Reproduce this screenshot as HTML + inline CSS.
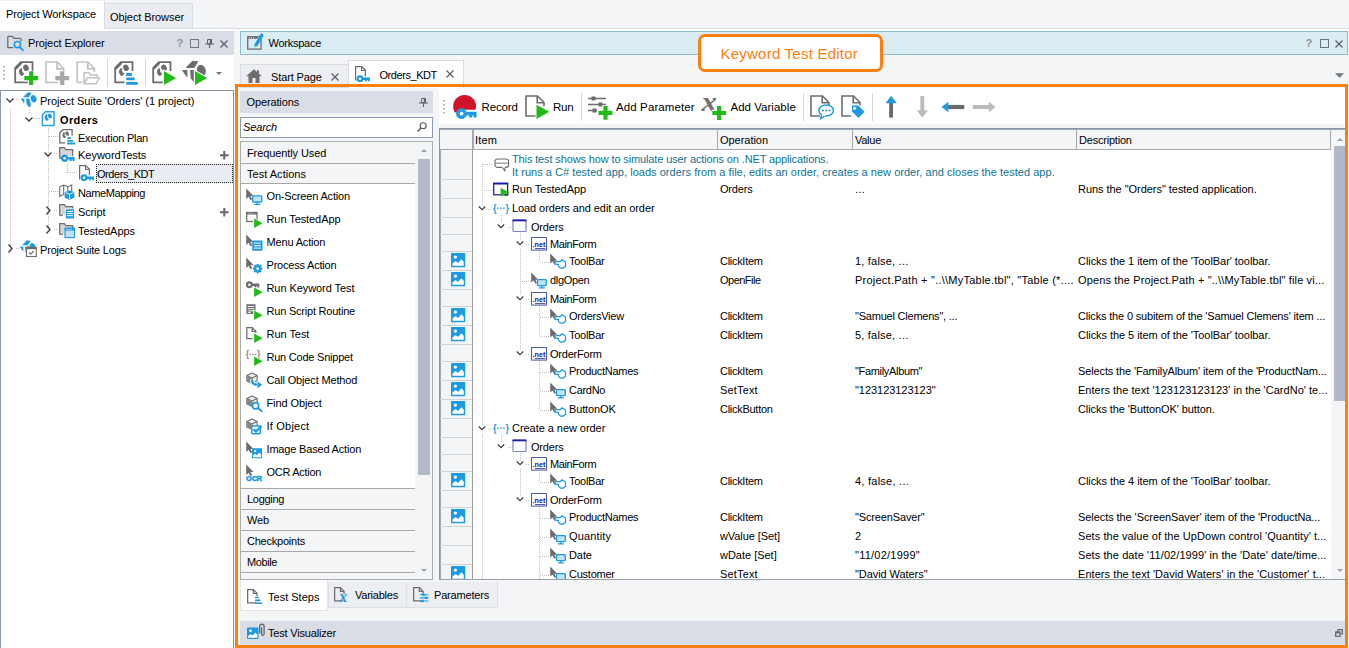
<!DOCTYPE html><html><head><meta charset="utf-8"><title>Keyword Test Editor</title><style>
html,body{margin:0;padding:0}
body{width:1349px;height:648px;position:relative;overflow:hidden;background:#f4f5f7;font-family:"Liberation Sans",sans-serif;font-size:11px;color:#000}
.a{position:absolute;box-sizing:border-box}
.t{position:absolute;white-space:pre;line-height:14px;height:14px}
svg{overflow:visible}
</style></head><body>
<div class="a" style="left:0px;top:28px;width:1349px;height:1px;background:#dadde5"></div>
<div class="a" style="left:0px;top:29px;width:1349px;height:2px;background:#fff"></div>
<div class="a" style="left:0px;top:0px;width:105px;height:29px;background:#fff;border-right:1px solid #dfe2e8;border-top:1px solid #eceef2"></div>
<div class="a" style="left:104px;top:3px;width:89px;height:25px;background:#eaecf1;border:1px solid #d9dce3;border-bottom:none"></div>
<div class="t" style="left:6px;top:6.99px;font-size:11px;color:#000;letter-spacing:-0.124px">Project Workspace</div>
<div class="t" style="left:110px;top:9.99px;font-size:11px;color:#000;letter-spacing:-0.086px">Object Browser</div>
<div class="a" style="left:0px;top:31px;width:234px;height:24px;background:#d9dde6"></div>
<svg class="a" style="left:7px;top:35px;" width="16" height="16" viewBox="0 0 16 16"><path d="M6.300 12.700H1.600a.8.8 0 0 1-.8-.8V2.200a.8.8 0 0 1 .8-.8h3.600l1.600 2h6.400a.8.8 0 0 1 .8.8v2.300" fill="none" stroke="#6d6d6d" stroke-width="1.300"/><circle cx="10.400" cy="9.600" r="3.100" fill="none" stroke="#1e9be0" stroke-width="1.600"/><path d="M12.700 12l3.100 3.200" stroke="#1e9be0" stroke-width="1.900" stroke-linecap="round"/></svg>
<div class="t" style="left:28px;top:35.99px;font-size:11px;color:#000;letter-spacing:-0.110px">Project Explorer</div>
<div class="t" style="left:176.5px;top:36.09px;font-size:11px;color:#8e929b;font-weight:bold">?</div>
<div class="a" style="left:190px;top:39px;width:9px;height:9px;border:1px solid #747881"></div>
<svg class="a" style="left:205px;top:39.2px;" width="9" height="9" viewBox="0 0 9 9"><path d="M2.500 .5h4v4.300h-4z" fill="none" stroke="#5f646e" stroke-width="1"/><path d="M5.600 .5v4.300" stroke="#5f646e" stroke-width="1.600"/><path d="M0 5h9M4.500 5v4" fill="none" stroke="#5f646e" stroke-width="1.100"/></svg>
<svg class="a" style="left:220px;top:39.5px;" width="8" height="8" viewBox="0 0 8 8"><path d="M.5 .5l7 7M7.5 .5l-7 7" stroke="#5b5f68" stroke-width="1.25" fill="none"/></svg>
<div class="a" style="left:0px;top:55px;width:234px;height:35px;background:#fff"></div>
<svg class="a" style="left:3px;top:66px;" width="3" height="14" viewBox="0 0 3 14"><path d="M1 0v14" stroke="#a2a2a2" stroke-width="1.600" stroke-dasharray="1.600 2.400"/></svg>
<svg class="a" style="left:14px;top:61px;" width="24" height="24" viewBox="0 0 24 24"><path d="M14 21.400H1.200V7L7 1.200h11.500V10" fill="#fff" stroke="#6d6d6d" stroke-width="1.800"/><path d="M1.600 7.400L7.400 1.600" stroke="#6d6d6d" stroke-width="2.800"/><path d="M6.500 7.200C4.200 9.500 4.600 13.500 8 15.200l2.600-2.800C8.200 12 7.400 9.500 8.400 7.600z" fill="#6d6d6d"/><ellipse cx="12" cy="6.800" rx="2.700" ry="3.300" transform="rotate(-25 12 6.800)" fill="#6d6d6d"/><path d="M17.2 9.799999999999999v14.800M9.799999999999999 17.2h14.800" stroke="#fff" stroke-width="6.400"/><path d="M17.2 10.299999999999999v13.800M10.299999999999999 17.2h13.800" stroke="#20bb15" stroke-width="4.200"/></svg>
<svg class="a" style="left:45px;top:61px;" width="24" height="24" viewBox="0 0 24 24"><path d="M13 21.400H1V1h11.200l6.500 6.500V10" fill="#fff" stroke="#c3c3c3" stroke-width="1.700"/><path d="M12 1.300v6.500h6.500" fill="none" stroke="#c3c3c3" stroke-width="1.700"/><path d="M17.2 9.799999999999999v14.800M9.799999999999999 17.2h14.800" stroke="#fff" stroke-width="6.400"/><path d="M17.2 10.299999999999999v13.800M10.299999999999999 17.2h13.800" stroke="#a8a8a8" stroke-width="4.200"/></svg>
<svg class="a" style="left:76px;top:61px;" width="24" height="24" viewBox="0 0 24 24"><path d="M6 21.400H1.200V1h10.800l6.400 6.500V11" fill="#fff" stroke="#c3c3c3" stroke-width="1.700"/><path d="M11.800 1.300v6.500h6.500" fill="none" stroke="#c3c3c3" stroke-width="1.700"/><path d="M8 22.600v-10.800h5l1.600 2.200h6.600v3" fill="#fff" stroke="#c3c3c3" stroke-width="1.600"/><path d="M8 22.800l3.400-6h12l-3.400 6z" fill="#fff" stroke="#c3c3c3" stroke-width="1.600"/></svg>
<div class="a" style="left:107px;top:59px;width:1px;height:28px;background:#d3d6dc"></div>
<svg class="a" style="left:114px;top:61px;" width="24" height="24" viewBox="0 0 24 24"><path d="M14 21.400H1.200V7L7 1.200h11.500V10" fill="#fff" stroke="#6d6d6d" stroke-width="1.800"/><path d="M1.600 7.400L7.400 1.600" stroke="#6d6d6d" stroke-width="2.800"/><path d="M6.500 7.200C4.200 9.500 4.600 13.500 8 15.200l2.600-2.800C8.200 12 7.400 9.500 8.400 7.600z" fill="#6d6d6d"/><ellipse cx="12" cy="6.800" rx="2.700" ry="3.300" transform="rotate(-25 12 6.800)" fill="#6d6d6d"/><path d="M10.500 10.500h10v14h-10z" fill="#fff"/><path d="M12.200 13.500h5.800M12.200 17.900h8.500M12.200 22.400h11.600" stroke="#1e9be0" stroke-width="2.800"/></svg>
<div class="a" style="left:145px;top:59px;width:1px;height:28px;background:#d3d6dc"></div>
<svg class="a" style="left:152px;top:61px;" width="24" height="24" viewBox="0 0 24 24"><path d="M14 21.400H1.200V7L7 1.200h11.500V10" fill="#fff" stroke="#6d6d6d" stroke-width="1.800"/><path d="M1.600 7.400L7.400 1.600" stroke="#6d6d6d" stroke-width="2.800"/><path d="M6.500 7.200C4.200 9.500 4.600 13.500 8 15.200l2.600-2.800C8.200 12 7.400 9.500 8.400 7.600z" fill="#6d6d6d"/><ellipse cx="12" cy="6.800" rx="2.700" ry="3.300" transform="rotate(-25 12 6.800)" fill="#6d6d6d"/><path d="M10.800 8L26 17 10.800 26z" fill="#fff"/><path d="M12 10.100v13.800L24 17z" fill="#20bb15"/></svg>
<svg class="a" style="left:183px;top:61px;" width="24" height="24" viewBox="0 0 24 24"><g transform="translate(-.600 -.800) scale(1.500)"><g fill="#6d6d6d" stroke="#6d6d6d" stroke-width=".7" stroke-linejoin="round"><path d="M2.700 4.900L6.800 .7l3.300 .4L7.700 4.900z"/><ellipse cx="12.600" cy="6.800" rx="2.600" ry="3.400" transform="rotate(-18 12.600 6.800)"/><path d="M.3 6.900H3v3.900z"/><path d="M5.500 6.900h2.600l1.500 6-1.100 2.300L5.900 12z"/></g></g><path d="M10.800 8L26 17 10.800 26z" fill="#fff"/><path d="M12 10.100v13.800L24 17z" fill="#20bb15"/></svg>
<svg class="a" style="left:216px;top:72px;" width="6" height="3" viewBox="0 0 6 3"><path d="M0 0h6L3 3z" fill="#70747c"/></svg>
<div class="a" style="left:0px;top:90px;width:234px;height:560px;background:#fff;border:1px solid #8a96ae"></div>
<div class="a" style="left:96px;top:164px;width:137px;height:19px;background:#e9ecf2;border:1px dotted #222"></div>
<div class="a" style="left:10px;top:108px;width:1px;height:138px;background-image:linear-gradient(#bdbdbd 1px,transparent 1px);background-size:1px 2px"></div>
<div class="a" style="left:16px;top:99px;width:4px;height:1px;background-image:linear-gradient(90deg,#bdbdbd 1px,transparent 1px);background-size:2px 1px"></div>
<div class="a" style="left:16px;top:248px;width:4px;height:1px;background-image:linear-gradient(90deg,#bdbdbd 1px,transparent 1px);background-size:2px 1px"></div>
<div class="a" style="left:29px;top:110px;width:1px;height:4px;background-image:linear-gradient(#bdbdbd 1px,transparent 1px);background-size:1px 2px"></div>
<div class="a" style="left:35px;top:118px;width:5px;height:1px;background-image:linear-gradient(90deg,#bdbdbd 1px,transparent 1px);background-size:2px 1px"></div>
<div class="a" style="left:48px;top:128px;width:1px;height:102px;background-image:linear-gradient(#bdbdbd 1px,transparent 1px);background-size:1px 2px"></div>
<div class="a" style="left:49px;top:136px;width:9px;height:1px;background-image:linear-gradient(90deg,#bdbdbd 1px,transparent 1px);background-size:2px 1px"></div>
<div class="a" style="left:54px;top:153px;width:4px;height:1px;background-image:linear-gradient(90deg,#bdbdbd 1px,transparent 1px);background-size:2px 1px"></div>
<div class="a" style="left:49px;top:191px;width:9px;height:1px;background-image:linear-gradient(90deg,#bdbdbd 1px,transparent 1px);background-size:2px 1px"></div>
<div class="a" style="left:54px;top:210px;width:4px;height:1px;background-image:linear-gradient(90deg,#bdbdbd 1px,transparent 1px);background-size:2px 1px"></div>
<div class="a" style="left:54px;top:229px;width:4px;height:1px;background-image:linear-gradient(90deg,#bdbdbd 1px,transparent 1px);background-size:2px 1px"></div>
<div class="a" style="left:67px;top:164px;width:1px;height:9px;background-image:linear-gradient(#bdbdbd 1px,transparent 1px);background-size:1px 2px"></div>
<div class="a" style="left:68px;top:172px;width:9px;height:1px;background-image:linear-gradient(90deg,#bdbdbd 1px,transparent 1px);background-size:2px 1px"></div>
<svg class="a" style="left:6px;top:97.8px;" width="8" height="5" viewBox="0 0 8 5"><path d="M.5 .5L4 4 7.5 .5" fill="none" stroke="#404040" stroke-width="1.350"/></svg>
<svg class="a" style="left:21px;top:92.2px;" width="16" height="16" viewBox="0 0 16 16"><g fill="#1e9be0" stroke="#1e9be0" stroke-width=".7" stroke-linejoin="round"><path d="M2.700 4.900L6.800 .7l3.300 .4L7.700 4.900z"/><ellipse cx="12.600" cy="6.800" rx="2.600" ry="3.400" transform="rotate(-18 12.600 6.800)"/><path d="M.3 6.900H3v3.900z"/><path d="M5.500 6.900h2.600l1.500 6-1.100 2.300L5.900 12z"/></g></svg>
<div class="t" style="left:40px;top:94.19px;font-size:11px;color:#000;letter-spacing:-0.042px">Project Suite 'Orders' (1 project)</div>
<svg class="a" style="left:25px;top:116.8px;" width="8" height="5" viewBox="0 0 8 5"><path d="M.5 .5L4 4 7.5 .5" fill="none" stroke="#404040" stroke-width="1.350"/></svg>
<svg class="a" style="left:41px;top:111.2px;" width="16" height="16" viewBox="0 0 16 16"><path d="M4.500 .8H13v13.600H1.400V3.900z" fill="#fff" stroke="#2ba4e6" stroke-width="1.500"/><path d="M5.400 3C3 5 3.200 8.600 6.200 10l1.700-2C6.100 7.600 5.700 5.600 6.700 4z" fill="#1e9be0"/><ellipse cx="8.900" cy="5" rx="1.900" ry="2.600" transform="rotate(-25 8.900 5)" fill="#1e9be0"/></svg>
<div class="t" style="left:60px;top:113.19px;font-size:11px;color:#000;font-weight:bold;letter-spacing:0.370px">Orders</div>
<svg class="a" style="left:59px;top:129.2px;" width="16" height="16" viewBox="0 0 16 16"><path d="M6 13.900H.8V3.700L3.800 .7h9.300v6" fill="#fff" stroke="#6d6d6d" stroke-width="1.300"/><path d="M5 3C2.800 4.800 3 8 5.600 9.300l1.500-1.800C5.500 7.100 5.200 5.300 6.100 3.900z" fill="#6d6d6d"/><ellipse cx="8.200" cy="4.600" rx="1.700" ry="2.300" transform="rotate(-25 8.200 4.600)" fill="#6d6d6d"/><path d="M8.200 9.200h3.600M8.200 11.900h6M8.200 14.500h7.800" stroke="#1e9be0" stroke-width="1.800"/></svg>
<div class="t" style="left:78px;top:131.19px;font-size:11px;color:#000;letter-spacing:-0.242px">Execution Plan</div>
<svg class="a" style="left:44px;top:151.8px;" width="8" height="5" viewBox="0 0 8 5"><path d="M.5 .5L4 4 7.5 .5" fill="none" stroke="#404040" stroke-width="1.350"/></svg>
<svg class="a" style="left:59px;top:146.2px;" width="16" height="16" viewBox="0 0 16 16"><path d="M.7 12.3V1.7h4.6l1.4 1.9h7v8.7" fill="#d6d6d6" stroke="#6d6d6d" stroke-width="1.2"/><path d="M.7 12.3h3" stroke="#6d6d6d" stroke-width="1.2"/><path d="M2 8.500h13.500v7.500H2z" fill="#fff" opacity=".0"/><g stroke="#fff" stroke-width="1.200"><g transform="translate(2.2 8.8) scale(1.15)"><circle cx="3" cy="3" r="2.050" fill="#fff" stroke="#1e9be0" stroke-width="1.900"/><path d="M5 1.900h6.600v2.200H5zM7.400 3.500h1.700v1.800H7.400zM9.900 3.500h1.700v1.800H9.900z" fill="#1e9be0"/></g></g><g transform="translate(2.2 8.8) scale(1.15)"><circle cx="3" cy="3" r="2.050" fill="#fff" stroke="#1e9be0" stroke-width="1.900"/><path d="M5 1.900h6.600v2.200H5zM7.400 3.500h1.700v1.800H7.400zM9.900 3.500h1.700v1.800H9.900z" fill="#1e9be0"/></g></svg>
<div class="t" style="left:78px;top:148.19px;font-size:11px;color:#000;letter-spacing:-0.015px">KeywordTests</div>
<svg class="a" style="left:78px;top:165.2px;" width="16" height="16" viewBox="0 0 16 16"><path d="M1.600 14.400V.7h6.200l3.600 3.600v6" fill="#fff" stroke="#6d6d6d" stroke-width="1.200"/><path d="M7.600 .9v3.600h3.600" fill="none" stroke="#6d6d6d" stroke-width="1.200"/><g transform="translate(2.6 9.2) scale(1.15)"><circle cx="3" cy="3" r="2.050" fill="#fff" stroke="#1e9be0" stroke-width="1.900"/><path d="M5 1.900h6.600v2.200H5zM7.400 3.500h1.700v1.800H7.400zM9.900 3.500h1.700v1.800H9.900z" fill="#1e9be0"/></g></svg>
<div class="t" style="left:97px;top:167.19px;font-size:11px;color:#000;letter-spacing:-0.435px">Orders_KDT</div>
<svg class="a" style="left:59px;top:184.2px;" width="16" height="16" viewBox="0 0 16 16"><path d="M.7 2.700L4.700 1l4 1.700 4-1.700v6M.7 2.700v9.600l4-1.700" fill="#fff" stroke="#6d6d6d" stroke-width="1.100"/><path d="M4.700 1v9.600M8.700 2.700v4" stroke="#6d6d6d" stroke-width="1.100" fill="none"/><path d="M10.500 6.200l4.800 2v5.600l-4.800 2-4.800-2V8.200z" fill="#1e9be0"/><path d="M6.500 8.600l4 1.700 4-1.700M10.500 10.300v4.700" stroke="#fff" stroke-width=".9" fill="none"/></svg>
<div class="t" style="left:78px;top:186.19px;font-size:11px;color:#000;letter-spacing:-0.413px">NameMapping</div>
<svg class="a" style="left:46px;top:206px;" width="5" height="9" viewBox="0 0 5 9"><path d="M.5 .5L4 4.5 .5 8.500" fill="none" stroke="#404040" stroke-width="1.350"/></svg>
<svg class="a" style="left:59px;top:203.2px;" width="16" height="16" viewBox="0 0 16 16"><path d="M.7 12.3V1.7h4.6l1.4 1.9h7v8.7" fill="#d6d6d6" stroke="#6d6d6d" stroke-width="1.2"/><path d="M.7 12.3h3" stroke="#6d6d6d" stroke-width="1.2"/><rect x="6.400" y="5.900" width="9" height="10" fill="#1e9be0" stroke="#fff" stroke-width=".8"/><path d="M8 8.500h6M8 10.600h6M8 12.700h6" stroke="#fff" stroke-width="1"/></svg>
<div class="t" style="left:78px;top:205.19px;font-size:11px;color:#000;letter-spacing:-0.137px">Script</div>
<svg class="a" style="left:46px;top:225px;" width="5" height="9" viewBox="0 0 5 9"><path d="M.5 .5L4 4.5 .5 8.500" fill="none" stroke="#404040" stroke-width="1.350"/></svg>
<svg class="a" style="left:59px;top:222.2px;" width="16" height="16" viewBox="0 0 16 16"><path d="M.7 12.3V1.7h4.6l1.4 1.9h7v8.7" fill="#d6d6d6" stroke="#6d6d6d" stroke-width="1.2"/><path d="M.7 12.3h3" stroke="#6d6d6d" stroke-width="1.2"/><rect x="6" y="6" width="9.500" height="9.600" fill="#bfe2f7" stroke="#1e9be0" stroke-width="1.100"/><path d="M6 7.300h9.500" stroke="#1e9be0" stroke-width="2.600"/><path d="M7.500 7.400h5" stroke="#fff" stroke-width=".9" stroke-dasharray="1 1"/></svg>
<div class="t" style="left:78px;top:224.19px;font-size:11px;color:#000;letter-spacing:-0.048px">TestedApps</div>
<svg class="a" style="left:8px;top:244px;" width="5" height="9" viewBox="0 0 5 9"><path d="M.5 .5L4 4.5 .5 8.500" fill="none" stroke="#404040" stroke-width="1.350"/></svg>
<svg class="a" style="left:21px;top:241.2px;" width="16" height="16" viewBox="0 0 16 16"><g transform="translate(-1 -1)"><g fill="#1e9be0" stroke="#1e9be0" stroke-width=".7" stroke-linejoin="round"><path d="M2.700 4.900L6.800 .7l3.300 .4L7.700 4.900z"/><ellipse cx="12.600" cy="6.800" rx="2.600" ry="3.400" transform="rotate(-18 12.600 6.800)"/><path d="M.3 6.900H3v3.900z"/><path d="M5.500 6.900h2.600l1.500 6-1.100 2.300L5.900 12z"/></g></g><rect x="5.500" y="6.500" width="9.800" height="9" fill="#fff" stroke="#6d6d6d" stroke-width="1.100"/><path d="M5.500 7.200h9.800" stroke="#6d6d6d" stroke-width="2"/><path d="M8 11.500l1.700 1.700 3-3.200" fill="none" stroke="#6d6d6d" stroke-width="1.100"/><path d="M7.500 5v2M13.300 5v2" stroke="#6d6d6d" stroke-width="1.200"/></svg>
<div class="t" style="left:40px;top:243.19px;font-size:11px;color:#000;letter-spacing:-0.182px">Project Suite Logs</div>
<svg class="a" style="left:219.5px;top:150.5px;" width="8.5" height="8.5" viewBox="0 0 9 9"><path d="M4.5 0v9M0 4.5h9" stroke="#666" stroke-width="2.100"/></svg>
<svg class="a" style="left:219.5px;top:207.5px;" width="8.5" height="8.5" viewBox="0 0 9 9"><path d="M4.5 0v9M0 4.5h9" stroke="#666" stroke-width="2.100"/></svg>
<div class="a" style="left:240px;top:31px;width:1108px;height:24px;background:#d9edf2;border:1px solid #8fbcd3"></div>
<svg class="a" style="left:247px;top:34px;" width="16" height="16" viewBox="0 0 16 16"><rect x=".7" y="2.700" width="13.400" height="12.400" fill="none" stroke="#6d6d6d" stroke-width="1.300"/><path d="M.7 3.800h10" stroke="#6d6d6d" stroke-width="2"/><path d="M2 3.800h6" stroke="#e4e4e4" stroke-width=".9" stroke-dasharray="1 1"/><path d="M14.700 1.300L9.300 10.600" stroke="#1e9be0" stroke-width="3.300" stroke-linecap="round"/><path d="M7.900 10.300l-.6 3 2.600-1.600z" fill="#1e9be0"/></svg>
<div class="t" style="left:268.5px;top:35.99px;font-size:11px;color:#000;letter-spacing:-0.259px">Workspace</div>
<div class="t" style="left:1305.5px;top:36.09px;font-size:11px;color:#8e929b;font-weight:bold">?</div>
<div class="a" style="left:1320px;top:39px;width:9px;height:9px;border:1px solid #6c7078"></div>
<svg class="a" style="left:1335px;top:39.5px;" width="8" height="8" viewBox="0 0 8 8"><path d="M.5 .5l7 7M7.5 .5l-7 7" stroke="#5b5f68" stroke-width="1.25" fill="none"/></svg>
<svg class="a" style="left:1335px;top:73px;" width="9" height="5" viewBox="0 0 6 3"><path d="M0 0h6L3 3z" fill="#70747c"/></svg>
<div class="a" style="left:240px;top:64px;width:109px;height:24px;background:#eceef3;border:1px solid #d9dce3"></div>
<svg class="a" style="left:246px;top:69px;" width="16" height="14" viewBox="0 0 16 14"><path d="M8 .3L.2 7.2h2.3V14h4V9h3v5h4V7.2h2.3L13 4.6V1.2h-2v1.7z" fill="#6d6d6d"/></svg>
<div class="t" style="left:271px;top:69.69px;font-size:11px;color:#000;letter-spacing:-0.128px">Start Page</div>
<svg class="a" style="left:331px;top:73px;" width="8" height="8" viewBox="0 0 8 8"><path d="M.5 .5l7 7M7.5 .5l-7 7" stroke="#5b5f68" stroke-width="1.25" fill="none"/></svg>
<div class="a" style="left:348px;top:60px;width:116px;height:28px;background:#fff;border:1px solid #d9dce3;border-bottom:none"></div>
<svg class="a" style="left:354px;top:66px;" width="16" height="16" viewBox="0 0 16 16"><path d="M1.600 14.400V.7h6.200l3.600 3.600v6" fill="#fff" stroke="#6d6d6d" stroke-width="1.200"/><path d="M7.600 .9v3.600h3.600" fill="none" stroke="#6d6d6d" stroke-width="1.200"/><g transform="translate(2.6 9.2) scale(1.15)"><circle cx="3" cy="3" r="2.050" fill="#fff" stroke="#1e9be0" stroke-width="1.900"/><path d="M5 1.900h6.600v2.200H5zM7.400 3.500h1.700v1.800H7.400zM9.900 3.500h1.700v1.800H9.900z" fill="#1e9be0"/></g></svg>
<div class="t" style="left:379.5px;top:67.99px;font-size:11px;color:#000;letter-spacing:-0.435px">Orders_KDT</div>
<svg class="a" style="left:446px;top:70px;" width="8" height="8" viewBox="0 0 8 8"><path d="M.5 .5l7 7M7.5 .5l-7 7" stroke="#5b5f68" stroke-width="1.25" fill="none"/></svg>
<div class="a" style="left:240px;top:91px;width:193px;height:22px;background:#d9dde6"></div>
<div class="t" style="left:246.5px;top:94.99px;font-size:11px;color:#000;letter-spacing:-0.131px">Operations</div>
<svg class="a" style="left:419px;top:97.7px;" width="9" height="9" viewBox="0 0 9 9"><path d="M2.500 .5h4v4.300h-4z" fill="none" stroke="#5f646e" stroke-width="1"/><path d="M5.600 .5v4.300" stroke="#5f646e" stroke-width="1.600"/><path d="M0 5h9M4.500 5v4" fill="none" stroke="#5f646e" stroke-width="1.100"/></svg>
<div class="a" style="left:240px;top:117px;width:193px;height:21px;background:#fff;border:1px solid #8e9ab3"></div>
<div class="t" style="left:243px;top:119.69px;font-size:11px;color:#000;font-style:italic;letter-spacing:-0.143px">Search</div>
<svg class="a" style="left:417px;top:122px;" width="10" height="10" viewBox="0 0 10 10"><circle cx="6.2" cy="3.8" r="3" fill="none" stroke="#555" stroke-width="1.1"/><path d="M4 6L.5 9.5" stroke="#555" stroke-width="1.4"/></svg>
<div class="a" style="left:240px;top:141px;width:193px;height:439px;background:#fff;border:1px solid #a9acb2"></div>
<div class="a" style="left:241px;top:142px;width:174px;height:21px;background:#f4f5f7"></div>
<div class="a" style="left:241px;top:163px;width:174px;height:1px;background:#a9a9a9"></div>
<div class="a" style="left:241px;top:164px;width:174px;height:19px;background:#f4f5f7"></div>
<div class="a" style="left:241px;top:183px;width:174px;height:1px;background:#a9a9a9"></div>
<div class="a" style="left:415px;top:142px;width:17px;height:437px;background:#f4f5f7"></div>
<div class="a" style="left:418px;top:159px;width:12px;height:316px;background:#b1b8c8"></div>
<svg class="a" style="left:421px;top:149px;" width="6" height="3" viewBox="0 0 6 3"><path d="M0 3h6L3 0z" fill="#9aa1b1"/></svg>
<svg class="a" style="left:421px;top:569px;" width="6" height="3" viewBox="0 0 6 3"><path d="M0 0h6L3 3z" fill="#9aa1b1"/></svg>
<div class="t" style="left:247px;top:145.99px;font-size:11px;color:#000;letter-spacing:-0.101px">Frequently Used</div>
<div class="t" style="left:247px;top:166.69px;font-size:11px;color:#000;letter-spacing:0.025px">Test Actions</div>
<svg class="a" style="left:246px;top:188.4px;" width="16.5" height="16.5" viewBox="0 0 16 16"><path d="M.2 .4v10.200l2.400-2.200 1.800 3.400 1.600-.8-1.700-3.300H7.300z" fill="#6c6c6c"/><rect x="6.500" y="7.600" width="8.800" height="6" rx=".8" fill="#c3e4f7" stroke="#1e9be0" stroke-width="1.300"/><path d="M10.900 13.800v2M8 15.900h5.800" stroke="#1e9be0" stroke-width="1.300"/></svg>
<div class="t" style="left:266.5px;top:189.19px;font-size:11px;color:#000;letter-spacing:-0.170px">On-Screen Action</div>
<svg class="a" style="left:246px;top:211.4px;" width="16.5" height="16.5" viewBox="0 0 16 16"><rect x=".7" y="1.400" width="10" height="8.800" fill="#fff" stroke="#6d6d6d" stroke-width="1.200"/><path d="M.7 2.300h10" stroke="#6d6d6d" stroke-width="2.200"/><path d="M2 2.200h5" stroke="#ddd" stroke-width=".8" stroke-dasharray="1 1"/><path d="M7 6L17 11.800 7 17.500z" fill="#fff"/><path d="M7.900 7.200v9.200l8.100-4.600z" fill="#20bb15"/></svg>
<div class="t" style="left:266.5px;top:212.19px;font-size:11px;color:#000;letter-spacing:-0.079px">Run TestedApp</div>
<svg class="a" style="left:246px;top:234.4px;" width="16.5" height="16.5" viewBox="0 0 16 16"><path d="M.2 .4v10.200l2.400-2.200 1.800 3.400 1.600-.8-1.700-3.300H7.300z" fill="#6c6c6c"/><rect x="6" y="6.200" width="10" height="10" rx=".8" fill="#1e9be0"/><path d="M7.600 8.900h6.800M7.600 11.300h6.800M7.600 13.700h6.800" stroke="#cfeafa" stroke-width="1.300"/></svg>
<div class="t" style="left:266.5px;top:235.19px;font-size:11px;color:#000;letter-spacing:-0.159px">Menu Action</div>
<svg class="a" style="left:246px;top:257.4px;" width="16.5" height="16.5" viewBox="0 0 16 16"><path d="M.2 .4v10.200l2.400-2.200 1.800 3.400 1.600-.8-1.700-3.300H7.300z" fill="#6c6c6c"/><g transform="translate(11.300 11.300)"><g fill="#1e9be0"><rect x="-1.100" y="-4.600" width="2.200" height="9.200" transform="rotate(0)"/><rect x="-1.100" y="-4.600" width="2.200" height="9.200" transform="rotate(45)"/><rect x="-1.100" y="-4.600" width="2.200" height="9.200" transform="rotate(90)"/><rect x="-1.100" y="-4.600" width="2.200" height="9.200" transform="rotate(135)"/><circle r="3.300"/></g><circle r="1.300" fill="#fff"/></g></svg>
<div class="t" style="left:266.5px;top:258.19px;font-size:11px;color:#000;letter-spacing:-0.205px">Process Action</div>
<svg class="a" style="left:246px;top:280.4px;" width="16.5" height="16.5" viewBox="0 0 16 16"><g transform="translate(-0.1 1.3) scale(1.12)"><circle cx="3" cy="3" r="2.050" fill="#fff" stroke="#6d6d6d" stroke-width="1.900"/><path d="M5 1.900h6.600v2.200H5zM7.400 3.500h1.700v1.800H7.400zM9.900 3.500h1.700v1.800H9.900z" fill="#6d6d6d"/></g><path d="M7 6L17 11.800 7 17.500z" fill="#fff"/><path d="M7.900 7.200v9.200l8.100-4.600z" fill="#20bb15"/></svg>
<div class="t" style="left:266.5px;top:281.19px;font-size:11px;color:#000;letter-spacing:-0.074px">Run Keyword Test</div>
<svg class="a" style="left:246px;top:303.4px;" width="16.5" height="16.5" viewBox="0 0 16 16"><rect x=".4" y="1.200" width="8.800" height="9.500" fill="#6d6d6d"/><path d="M1.700 3.400h6.200M1.700 5.500h6.200M1.700 7.600h6.200M1.700 9.400h3" stroke="#fff" stroke-width=".9"/><path d="M7 6L17 11.800 7 17.500z" fill="#fff"/><path d="M7.900 7.200v9.200l8.100-4.600z" fill="#20bb15"/></svg>
<div class="t" style="left:266.5px;top:304.19px;font-size:11px;color:#000;letter-spacing:-0.213px">Run Script Routine</div>
<svg class="a" style="left:246px;top:326.4px;" width="16.5" height="16.5" viewBox="0 0 16 16"><path d="M6.500 12.200H.8V1.500h5.300l3.400 3.400v2" fill="#fff" stroke="#6d6d6d" stroke-width="1.200"/><path d="M6 1.700v3.400h3.400" fill="none" stroke="#6d6d6d" stroke-width="1.200"/><path d="M7 6L17 11.800 7 17.500z" fill="#fff"/><path d="M7.900 7.200v9.200l8.100-4.600z" fill="#20bb15"/></svg>
<div class="t" style="left:266.5px;top:327.19px;font-size:11px;color:#000;letter-spacing:-0.040px">Run Test</div>
<svg class="a" style="left:246px;top:349.4px;" width="16.5" height="16.5" viewBox="0 0 16 16"><text x="0" y="7.600" font-family="Liberation Sans" font-size="9" fill="#747474" stroke="#747474" stroke-width=".25" textLength="13.500" lengthAdjust="spacingAndGlyphs">{···}</text><path d="M7 6L17 11.800 7 17.500z" fill="#fff"/><path d="M7.900 7.200v9.200l8.100-4.600z" fill="#20bb15"/></svg>
<div class="t" style="left:266.5px;top:350.19px;font-size:11px;color:#000;letter-spacing:-0.225px">Run Code Snippet</div>
<svg class="a" style="left:246px;top:372.4px;" width="16.5" height="16.5" viewBox="0 0 16 16"><path d="M.8 3.400L5.800 1l5 2.400v5.200L5.800 11 .8 8.600z" fill="#efefef" stroke="#6d6d6d" stroke-width="1.100" stroke-linejoin="round"/><path d="M.8 3.400l5 2.400 5-2.400M5.800 5.800V11" fill="none" stroke="#6d6d6d" stroke-width="1.100"/><path d="M1.200 3.900l4.400 2.100v4.500L1.200 8.400z" fill="#858585"/><path d="M6 7v1.700c0 2.200 1.600 3.600 5.200 3.600" fill="none" stroke="#fff" stroke-width="4"/><path d="M6 7v1.700c0 2.200 1.600 3.600 5.200 3.600" fill="none" stroke="#1e9be0" stroke-width="2.200"/><path d="M10.600 8L16.200 12.300 10.600 16.600z" fill="#fff"/><path d="M11.100 9L15.600 12.300 11.100 15.700z" fill="#1e9be0"/></svg>
<div class="t" style="left:266.5px;top:373.19px;font-size:11px;color:#000;letter-spacing:-0.158px">Call Object Method</div>
<svg class="a" style="left:246px;top:395.4px;" width="16.5" height="16.5" viewBox="0 0 16 16"><path d="M.8 3.400L5.800 1l5 2.400v5.200L5.800 11 .8 8.600z" fill="#efefef" stroke="#6d6d6d" stroke-width="1.100" stroke-linejoin="round"/><path d="M.8 3.400l5 2.400 5-2.400M5.800 5.800V11" fill="none" stroke="#6d6d6d" stroke-width="1.100"/><path d="M1.200 3.900l4.400 2.100v4.500L1.200 8.400z" fill="#858585"/><circle cx="9.300" cy="10.400" r="3" fill="#fff" stroke="#1e9be0" stroke-width="1.600"/><path d="M11.500 12.700l3.700 3" stroke="#1e9be0" stroke-width="1.900" stroke-linecap="round"/></svg>
<div class="t" style="left:266.5px;top:396.19px;font-size:11px;color:#000;letter-spacing:-0.095px">Find Object</div>
<svg class="a" style="left:246px;top:418.4px;" width="16.5" height="16.5" viewBox="0 0 16 16"><path d="M.8 3.400L5.800 1l5 2.400v5.200L5.800 11 .8 8.600z" fill="#efefef" stroke="#6d6d6d" stroke-width="1.100" stroke-linejoin="round"/><path d="M.8 3.400l5 2.400 5-2.400M5.800 5.800V11" fill="none" stroke="#6d6d6d" stroke-width="1.100"/><path d="M1.200 3.900l4.400 2.100v4.500L1.200 8.400z" fill="#858585"/><rect x="5.600" y="7.700" width="8.200" height="7.600" rx=".9" fill="#fff" stroke="#1e9be0" stroke-width="1.500"/><path d="M7.300 10.900l2.200 2.300 5.700-5.600" fill="none" stroke="#1e9be0" stroke-width="2.100"/></svg>
<div class="t" style="left:266.5px;top:419.19px;font-size:11px;color:#000;letter-spacing:0.215px">If Object</div>
<svg class="a" style="left:246px;top:441.4px;" width="16.5" height="16.5" viewBox="0 0 16 16"><path d="M.2 .4v10.200l2.400-2.200 1.800 3.400 1.600-.8-1.700-3.300H7.300z" fill="#6c6c6c"/><g transform="translate(5.9 7) scale(0.97)"><rect width="10" height="10" rx=".4" fill="#1e9be0"/><path d="M1 9V7.400L3.200 5.600 5 7 7.300 4.400 9 6.200V9z" fill="#fff"/><circle cx="3.100" cy="2.900" r="1.150" fill="#fff"/></g></svg>
<div class="t" style="left:266.5px;top:442.19px;font-size:11px;color:#000;letter-spacing:-0.180px">Image Based Action</div>
<svg class="a" style="left:246px;top:464.4px;" width="16.5" height="16.5" viewBox="0 0 16 16"><path d="M.2 .4v10.200l2.400-2.200 1.800 3.400 1.600-.8-1.700-3.300H7.300z" fill="#6c6c6c"/><text x="0" y="16.300" font-family="Liberation Sans" font-weight="bold" font-size="7" fill="#1e9be0" stroke="#1e9be0" stroke-width=".55" textLength="15.600" lengthAdjust="spacingAndGlyphs">OCR</text></svg>
<div class="t" style="left:266.5px;top:465.19px;font-size:11px;color:#000;letter-spacing:-0.287px">OCR Action</div>
<div class="a" style="left:241px;top:488px;width:174px;height:1px;background:#a9a9a9"></div>
<div class="a" style="left:241px;top:489px;width:174px;height:20px;background:#f4f5f7"></div>
<div class="t" style="left:247px;top:492.09px;font-size:11px;color:#000;letter-spacing:-0.279px">Logging</div>
<div class="a" style="left:241px;top:509px;width:174px;height:1px;background:#a9a9a9"></div>
<div class="a" style="left:241px;top:510px;width:174px;height:20px;background:#f4f5f7"></div>
<div class="t" style="left:247px;top:513.09px;font-size:11px;color:#000;letter-spacing:-0.141px">Web</div>
<div class="a" style="left:241px;top:530px;width:174px;height:1px;background:#a9a9a9"></div>
<div class="a" style="left:241px;top:531px;width:174px;height:20px;background:#f4f5f7"></div>
<div class="t" style="left:247px;top:534.09px;font-size:11px;color:#000;letter-spacing:-0.232px">Checkpoints</div>
<div class="a" style="left:241px;top:551px;width:174px;height:1px;background:#a9a9a9"></div>
<div class="a" style="left:241px;top:552px;width:174px;height:20px;background:#f4f5f7"></div>
<div class="t" style="left:247px;top:555.09px;font-size:11px;color:#000;letter-spacing:-0.401px">Mobile</div>
<div class="a" style="left:241px;top:572px;width:174px;height:1px;background:#a9a9a9"></div>
<div class="a" style="left:241px;top:573px;width:174px;height:6px;background:#f4f5f7"></div>
<div class="a" style="left:439px;top:88px;width:906px;height:36px;background:#fff"></div>
<svg class="a" style="left:443px;top:100px;" width="3" height="14" viewBox="0 0 3 14"><path d="M1 0v14" stroke="#a2a2a2" stroke-width="1.600" stroke-dasharray="1.600 2.400"/></svg>
<svg class="a" style="left:453px;top:95px;" width="24" height="24" viewBox="0 0 24 24"><circle cx="11.600" cy="11.400" r="11.400" fill="#d0122a"/><path d="M0 17.500h24V24H0z" fill="#fff"/><g stroke="#fff" stroke-width="2.200"><g transform="translate(3.3 13.3) scale(1.75)"><circle cx="3" cy="3" r="2.050" fill="#fff" stroke="#1e9be0" stroke-width="1.900"/><path d="M5 1.900h6.600v2.200H5zM7.400 3.500h1.700v1.800H7.400zM9.900 3.500h1.700v1.800H9.900z" fill="#1e9be0"/></g></g><g transform="translate(3.3 13.3) scale(1.75)"><circle cx="3" cy="3" r="2.050" fill="#fff" stroke="#1e9be0" stroke-width="1.900"/><path d="M5 1.900h6.600v2.200H5zM7.400 3.500h1.700v1.800H7.400zM9.900 3.500h1.700v1.800H9.900z" fill="#1e9be0"/></g></svg>
<div class="t" style="left:481.5px;top:99.82px;font-size:11.5px;color:#000;letter-spacing:-0.146px">Record</div>
<svg class="a" style="left:525px;top:95px;" width="24" height="24" viewBox="0 0 24 24"><path d="M12 21H1V1h11.500l6.500 6.500V11" fill="#fff" stroke="#6d6d6d" stroke-width="1.600"/><path d="M12.200 1.300v6.500h6.500" fill="none" stroke="#6d6d6d" stroke-width="1.600"/><path d="M10.500 8.500L25.500 16.800 10.500 25z" fill="#fff"/><path d="M11.500 9.700v14.200L24.200 16.800z" fill="#20bb15"/></svg>
<div class="t" style="left:553px;top:99.82px;font-size:11.5px;color:#000;letter-spacing:-0.203px">Run</div>
<div class="a" style="left:581px;top:93px;width:1px;height:28px;background:#d3d6dc"></div>
<svg class="a" style="left:588px;top:95px;" width="24" height="24" viewBox="0 0 24 24"><path d="M0 3.500h18M0 9.500h18M0 15.500h9" stroke="#6d6d6d" stroke-width="1.300"/><rect x="3.500" y="1.500" width="4" height="4" fill="#6d6d6d"/><rect x="10.500" y="7.500" width="4" height="4" fill="#6d6d6d"/><rect x="4.500" y="13.500" width="4" height="4" fill="#6d6d6d"/><path d="M17.5 10.4v14.800M10.1 17.8h14.800" stroke="#fff" stroke-width="6.400"/><path d="M17.5 10.9v13.800M10.6 17.8h13.800" stroke="#20bb15" stroke-width="4.200"/></svg>
<div class="t" style="left:616px;top:99.82px;font-size:11.5px;color:#000;letter-spacing:0.111px">Add Parameter</div>
<svg class="a" style="left:702px;top:95px;" width="24" height="24" viewBox="0 0 24 24"><text x="-.5" y="15.500" font-family="Liberation Serif" font-style="italic" font-weight="bold" font-size="28" fill="#707070" textLength="15.500" lengthAdjust="spacingAndGlyphs">x</text><path d="M17.2 10.6v14.800M9.799999999999999 18h14.800" stroke="#fff" stroke-width="6.400"/><path d="M17.2 11.1v13.800M10.299999999999999 18h13.800" stroke="#20bb15" stroke-width="4.200"/></svg>
<div class="t" style="left:730.5px;top:99.82px;font-size:11.5px;color:#000;letter-spacing:0.025px">Add Variable</div>
<div class="a" style="left:803px;top:93px;width:1px;height:28px;background:#d3d6dc"></div>
<svg class="a" style="left:810px;top:95px;" width="24" height="24" viewBox="0 0 24 24"><path d="M10 21H1V1h11.500l6.500 6.500V11" fill="#fff" stroke="#6d6d6d" stroke-width="1.600"/><path d="M12.200 1.300v6.500h6.500" fill="none" stroke="#6d6d6d" stroke-width="1.600"/><ellipse cx="16.200" cy="15.500" rx="7.300" ry="5.400" fill="#fff" stroke="#1e9be0" stroke-width="1.500"/><path d="M11.600 19.300l-.8 4.200 4.400-2.600" fill="#fff" stroke="#1e9be0" stroke-width="1.400"/><path d="M12.100 19l3 1.600" stroke="#fff" stroke-width="2"/><circle cx="12.900" cy="15.500" r="1.050" fill="#1e9be0"/><circle cx="16.200" cy="15.500" r="1.050" fill="#1e9be0"/><circle cx="19.500" cy="15.500" r="1.050" fill="#1e9be0"/></svg>
<svg class="a" style="left:841px;top:95px;" width="24" height="24" viewBox="0 0 24 24"><path d="M10 21H1V1h11.500l6.500 6.500V11" fill="#fff" stroke="#6d6d6d" stroke-width="1.600"/><path d="M12.200 1.300v6.500h6.500" fill="none" stroke="#6d6d6d" stroke-width="1.600"/><path d="M10.400 9.800h7.200l6.700 7-6.900 7-7-6.900z" fill="#1e9be0" stroke="#fff" stroke-width="1.200"/><circle cx="13.600" cy="13.200" r="1.500" fill="#fff"/></svg>
<div class="a" style="left:872px;top:93px;width:1px;height:28px;background:#d3d6dc"></div>
<svg class="a" style="left:879px;top:95px;" width="24" height="24" viewBox="0 0 24 24"><path d="M12.100 8v14.600" stroke="#6a6a6a" stroke-width="3.900"/><path d="M12.100 .7L6.500 8.200h11.200z" fill="#1e9be0"/></svg>
<svg class="a" style="left:910px;top:95px;" width="24" height="24" viewBox="0 0 24 24"><path d="M12.300 .9v15" stroke="#bababa" stroke-width="3.900"/><path d="M12.300 22.800L6.700 15.300h11.200z" fill="#bababa"/></svg>
<svg class="a" style="left:941px;top:95px;" width="24" height="24" viewBox="0 0 24 24"><path d="M7 12h16.300" stroke="#6a6a6a" stroke-width="4.200"/><path d="M.6 12L7.400 6.700v10.600z" fill="#1e9be0"/></svg>
<svg class="a" style="left:972px;top:95px;" width="24" height="24" viewBox="0 0 24 24"><path d="M.9 12h16.300" stroke="#bababa" stroke-width="4"/><path d="M23.600 12L16.800 6.700v10.600z" fill="#bababa"/></svg>
<div class="a" style="left:439px;top:128px;width:906px;height:452px;background:#fff;border-left:1px solid #8796ae;border-top:1px solid #8796ae;border-bottom:1px solid #9a9fa8"></div>
<div class="a" style="left:440px;top:129px;width:905px;height:1px;background:#a3a7ae"></div>
<div class="a" style="left:440px;top:129px;width:1px;height:450px;background:#a3a7ae"></div>
<div class="a" style="left:440px;top:130px;width:891px;height:20px;background:#f4f5f7;border-bottom:1px solid #a6a8ac;border-right:1px solid #a6a8ac"></div>
<div class="a" style="left:717px;top:130px;width:1px;height:19px;background:#a6a8ac"></div>
<div class="a" style="left:852px;top:130px;width:1px;height:19px;background:#a6a8ac"></div>
<div class="a" style="left:1076px;top:130px;width:1px;height:19px;background:#a6a8ac"></div>
<div class="a" style="left:441px;top:130px;width:32px;height:449px;background:#f4f5f7;border-right:1px solid #9c9c9c"></div>
<div class="a" style="left:472px;top:130px;width:2px;height:19px;background:#a9a9a9"></div>
<div class="a" style="left:440px;top:149px;width:33px;height:1px;background:#a6a8ac"></div>
<div class="t" style="left:475px;top:133.19px;font-size:11px;color:#000;letter-spacing:0.198px">Item</div>
<div class="t" style="left:720px;top:133.19px;font-size:11px;color:#000;letter-spacing:-0.035px">Operation</div>
<div class="t" style="left:855px;top:133.19px;font-size:11px;color:#000;letter-spacing:-0.266px">Value</div>
<div class="t" style="left:1079px;top:133.19px;font-size:11px;color:#000;letter-spacing:-0.212px">Description</div>
<div class="a" style="left:1331px;top:130px;width:14px;height:449px;background:#f4f5f7"></div>
<div class="a" style="left:1334px;top:146px;width:11px;height:255px;background:#b1b8c8"></div>
<svg class="a" style="left:1337px;top:137.5px;" width="6" height="3" viewBox="0 0 6 3"><path d="M0 3h6L3 0z" fill="#9aa1b1"/></svg>
<svg class="a" style="left:1337px;top:568.5px;" width="6" height="3" viewBox="0 0 6 3"><path d="M0 0h6L3 3z" fill="#9aa1b1"/></svg>
<div class="a" style="left:440px;top:150px;width:891px;height:429px;overflow:hidden">
<div class="a" style="left:42px;top:14px;width:1px;height:420px;background-image:linear-gradient(#c2c2c2 1px,transparent 1px);background-size:1px 2px"></div>
<div class="a" style="left:43px;top:14px;width:9px;height:1px;background-image:linear-gradient(90deg,#c2c2c2 1px,transparent 1px);background-size:2px 1px"></div>
<div class="a" style="left:44px;top:40px;width:9px;height:1px;background-image:linear-gradient(90deg,#c2c2c2 1px,transparent 1px);background-size:2px 1px"></div>
<div class="a" style="left:61px;top:65px;width:1px;height:12px;background-image:linear-gradient(#c2c2c2 1px,transparent 1px);background-size:1px 2px"></div>
<div class="a" style="left:48px;top:59px;width:4px;height:1px;background-image:linear-gradient(90deg,#c2c2c2 1px,transparent 1px);background-size:2px 1px"></div>
<div class="a" style="left:80px;top:83px;width:1px;height:121px;background-image:linear-gradient(#c2c2c2 1px,transparent 1px);background-size:1px 2px"></div>
<div class="a" style="left:68px;top:77px;width:4px;height:1px;background-image:linear-gradient(90deg,#c2c2c2 1px,transparent 1px);background-size:2px 1px"></div>
<div class="a" style="left:99px;top:100px;width:1px;height:12px;background-image:linear-gradient(#c2c2c2 1px,transparent 1px);background-size:1px 2px"></div>
<div class="a" style="left:86px;top:94px;width:4px;height:1px;background-image:linear-gradient(90deg,#c2c2c2 1px,transparent 1px);background-size:2px 1px"></div>
<div class="a" style="left:100px;top:112px;width:9px;height:1px;background-image:linear-gradient(90deg,#c2c2c2 1px,transparent 1px);background-size:2px 1px"></div>
<div class="a" style="left:82px;top:131px;width:9px;height:1px;background-image:linear-gradient(90deg,#c2c2c2 1px,transparent 1px);background-size:2px 1px"></div>
<div class="a" style="left:99px;top:155px;width:1px;height:31px;background-image:linear-gradient(#c2c2c2 1px,transparent 1px);background-size:1px 2px"></div>
<div class="a" style="left:86px;top:149px;width:4px;height:1px;background-image:linear-gradient(90deg,#c2c2c2 1px,transparent 1px);background-size:2px 1px"></div>
<div class="a" style="left:100px;top:167px;width:9px;height:1px;background-image:linear-gradient(90deg,#c2c2c2 1px,transparent 1px);background-size:2px 1px"></div>
<div class="a" style="left:100px;top:186px;width:9px;height:1px;background-image:linear-gradient(90deg,#c2c2c2 1px,transparent 1px);background-size:2px 1px"></div>
<div class="a" style="left:99px;top:210px;width:1px;height:50px;background-image:linear-gradient(#c2c2c2 1px,transparent 1px);background-size:1px 2px"></div>
<div class="a" style="left:86px;top:204px;width:4px;height:1px;background-image:linear-gradient(90deg,#c2c2c2 1px,transparent 1px);background-size:2px 1px"></div>
<div class="a" style="left:100px;top:222px;width:9px;height:1px;background-image:linear-gradient(90deg,#c2c2c2 1px,transparent 1px);background-size:2px 1px"></div>
<div class="a" style="left:100px;top:241px;width:9px;height:1px;background-image:linear-gradient(90deg,#c2c2c2 1px,transparent 1px);background-size:2px 1px"></div>
<div class="a" style="left:100px;top:260px;width:9px;height:1px;background-image:linear-gradient(90deg,#c2c2c2 1px,transparent 1px);background-size:2px 1px"></div>
<div class="a" style="left:61px;top:285px;width:1px;height:12px;background-image:linear-gradient(#c2c2c2 1px,transparent 1px);background-size:1px 2px"></div>
<div class="a" style="left:48px;top:279px;width:4px;height:1px;background-image:linear-gradient(90deg,#c2c2c2 1px,transparent 1px);background-size:2px 1px"></div>
<div class="a" style="left:80px;top:303px;width:1px;height:47px;background-image:linear-gradient(#c2c2c2 1px,transparent 1px);background-size:1px 2px"></div>
<div class="a" style="left:68px;top:297px;width:4px;height:1px;background-image:linear-gradient(90deg,#c2c2c2 1px,transparent 1px);background-size:2px 1px"></div>
<div class="a" style="left:99px;top:320px;width:1px;height:12px;background-image:linear-gradient(#c2c2c2 1px,transparent 1px);background-size:1px 2px"></div>
<div class="a" style="left:86px;top:314px;width:4px;height:1px;background-image:linear-gradient(90deg,#c2c2c2 1px,transparent 1px);background-size:2px 1px"></div>
<div class="a" style="left:100px;top:332px;width:9px;height:1px;background-image:linear-gradient(90deg,#c2c2c2 1px,transparent 1px);background-size:2px 1px"></div>
<div class="a" style="left:99px;top:356px;width:1px;height:94px;background-image:linear-gradient(#c2c2c2 1px,transparent 1px);background-size:1px 2px"></div>
<div class="a" style="left:86px;top:350px;width:4px;height:1px;background-image:linear-gradient(90deg,#c2c2c2 1px,transparent 1px);background-size:2px 1px"></div>
<div class="a" style="left:100px;top:368px;width:9px;height:1px;background-image:linear-gradient(90deg,#c2c2c2 1px,transparent 1px);background-size:2px 1px"></div>
<div class="a" style="left:100px;top:387px;width:9px;height:1px;background-image:linear-gradient(90deg,#c2c2c2 1px,transparent 1px);background-size:2px 1px"></div>
<div class="a" style="left:100px;top:406px;width:9px;height:1px;background-image:linear-gradient(90deg,#c2c2c2 1px,transparent 1px);background-size:2px 1px"></div>
<div class="a" style="left:100px;top:425px;width:9px;height:1px;background-image:linear-gradient(90deg,#c2c2c2 1px,transparent 1px);background-size:2px 1px"></div>
<svg class="a" style="left:53.5px;top:8.300000000000011px;" width="16" height="14.1" viewBox="0 0 17 15"><rect x="1" y="1" width="14.500" height="9" rx="2.800" fill="#fff" stroke="#6d6d6d" stroke-width="1.200"/><path d="M8.500 9.600l3 4 .3-4" fill="#fff" stroke="#6d6d6d" stroke-width="1.200"/><path d="M8.800 9.400h3" stroke="#fff" stroke-width="1.400"/><path d="M1 5.500h14.500" stroke="#6d6d6d" stroke-width="1"/></svg>
<div class="t" style="left:72px;top:2.19px;font-size:11px;color:#0f7391;letter-spacing:-0.131px">This test shows how to simulate user actions on .NET applications.</div>
<div class="t" style="left:72px;top:15.19px;font-size:11px;color:#0f7391;letter-spacing:0.030px">It runs a C# tested app, loads orders from a file, edits an order, creates a new order, and closes the tested app.</div>
<div class="a" style="left:0px;top:29px;width:32px;height:1px;background:#cfd2d8"></div>
<svg class="a" style="left:53px;top:31.87499999999997px;" width="16" height="16" viewBox="0 0 16 16"><rect x=".7" y="1.400" width="13.900" height="11.400" fill="#fff" stroke="#1515a5" stroke-width="1.200"/><path d="M.1 1.600h15.100" stroke="#1515a5" stroke-width="1.800"/><path d="M11 12.800h3.600v-4" fill="none" stroke="#333" stroke-width="1.300"/><path d="M7.600 5.800v9l8-4.500z" fill="#20bb15"/></svg>
<div class="t" style="left:72px;top:31.96px;font-size:11px;color:#000;letter-spacing:-0.079px">Run TestedApp</div>
<div class="t" style="left:280px;top:31.96px;font-size:11px;color:#000;letter-spacing:-0.188px">Orders</div>
<div class="t" style="left:415px;top:31.96px;font-size:11px;color:#000;letter-spacing:0.376px">...</div>
<div class="t" style="left:638px;top:31.96px;font-size:11px;color:#000;letter-spacing:-0.042px">Runs the "Orders" tested application.</div>
<div class="a" style="left:0px;top:48px;width:32px;height:1px;background:#cfd2d8"></div>
<div class="a" style="left:37px;top:55px;width:11px;height:8px;background:#fff"></div>
<svg class="a" style="left:38px;top:56.02499999999998px;" width="8" height="4.6" viewBox="0 0 8 5"><path d="M.5 .5L4 4 7.5 .5" fill="none" stroke="#404040" stroke-width="1.350"/></svg>
<svg class="a" style="left:53px;top:49.82499999999996px;" width="16" height="16" viewBox="0 0 16 16"><text x="0" y="12" font-family="Liberation Sans" font-weight="bold" font-size="11" fill="#1e9be0" textLength="16" lengthAdjust="spacingAndGlyphs">{···}</text></svg>
<div class="t" style="left:72px;top:50.91px;font-size:11px;color:#000;letter-spacing:-0.084px">Load orders and edit an order</div>
<div class="a" style="left:0px;top:67px;width:32px;height:1px;background:#cfd2d8"></div>
<div class="a" style="left:56px;top:73px;width:11px;height:8px;background:#fff"></div>
<svg class="a" style="left:57px;top:74.04999999999998px;" width="8" height="4.6" viewBox="0 0 8 5"><path d="M.5 .5L4 4 7.5 .5" fill="none" stroke="#404040" stroke-width="1.350"/></svg>
<svg class="a" style="left:72px;top:67.84999999999997px;" width="16" height="16" viewBox="0 0 16 16"><rect x="1" y="2" width="13" height="11.500" rx="1" fill="#fff" stroke="#7d86c8" stroke-width="1.200"/><path d="M.5 2.400h14" stroke="#1c1ca8" stroke-width="1.800"/></svg>
<div class="t" style="left:91px;top:70.14px;font-size:11px;color:#000;letter-spacing:-0.188px">Orders</div>
<div class="a" style="left:0px;top:84px;width:32px;height:1px;background:#cfd2d8"></div>
<div class="a" style="left:75px;top:90px;width:11px;height:8px;background:#fff"></div>
<svg class="a" style="left:76px;top:91.14999999999995px;" width="8" height="4.6" viewBox="0 0 8 5"><path d="M.5 .5L4 4 7.5 .5" fill="none" stroke="#404040" stroke-width="1.350"/></svg>
<svg class="a" style="left:91px;top:85.74999999999994px;" width="16" height="16" viewBox="0 0 16 16"><rect x=".5" y="1.500" width="15" height="12.600" fill="#fff" stroke="#4a5ea6" stroke-width="1"/><text x="1.600" y="11.300" font-family="Liberation Sans" font-weight="bold" font-size="8" fill="#17178f" textLength="12.800" lengthAdjust="spacingAndGlyphs">.net</text><path d="M4 12.600h10.400" stroke="#17178f" stroke-width=".8"/></svg>
<div class="t" style="left:110px;top:87.24px;font-size:11px;color:#000;letter-spacing:-0.414px">MainForm</div>
<div class="a" style="left:0px;top:101px;width:32px;height:1px;background:#cfd2d8"></div>
<svg class="a" style="left:110px;top:102.77499999999998px;" width="16" height="16" viewBox="0 0 16 16"><path d="M.2 .4v10.200l2.400-2.200 1.800 3.400 1.600-.8-1.700-3.300H7.300z" fill="#6c6c6c"/><path d="M6.300 8.500h4l1.700-1.700 3.500 2.300v4.100l-2.100 1.800h-3.100l-1.900-1.900v-1.800H6.300a1.400 1.400 0 0 1 0-2.800z" fill="#fff" stroke="#1e9be0" stroke-width="1.250" stroke-linejoin="round"/></svg>
<div class="t" style="left:129px;top:104.06px;font-size:11px;color:#000;letter-spacing:-0.271px">ToolBar</div>
<div class="t" style="left:280px;top:104.06px;font-size:11px;color:#000;letter-spacing:-0.293px">ClickItem</div>
<div class="t" style="left:415px;top:104.06px;font-size:11px;color:#000;letter-spacing:0.204px">1, false, ...</div>
<div class="t" style="left:638px;top:104.06px;font-size:11px;color:#000;letter-spacing:-0.060px">Clicks the 1 item of the 'ToolBar' toolbar.</div>
<svg class="a" style="left:10.5px;top:102.87499999999997px;" width="14.2" height="14.2" viewBox="0 0 14 14"><g transform="translate(0 0) scale(1.4)"><rect width="10" height="10" rx=".4" fill="#1e9be0"/><path d="M1 9V7.400L3.200 5.600 5 7 7.300 4.400 9 6.200V9z" fill="#fff"/><circle cx="3.100" cy="2.900" r="1.150" fill="#fff"/></g></svg>
<div class="a" style="left:0px;top:120px;width:32px;height:1px;background:#cfd2d8"></div>
<svg class="a" style="left:91px;top:121.72499999999991px;" width="16" height="16" viewBox="0 0 16 16"><path d="M.2 .4v10.200l2.400-2.200 1.800 3.400 1.600-.8-1.700-3.300H7.300z" fill="#6c6c6c"/><rect x="6.500" y="7.600" width="8.800" height="6" rx=".8" fill="#c3e4f7" stroke="#1e9be0" stroke-width="1.300"/><path d="M10.900 13.800v2M8 15.900h5.800" stroke="#1e9be0" stroke-width="1.300"/></svg>
<div class="t" style="left:110px;top:123.01px;font-size:11px;color:#000;letter-spacing:-0.313px">dlgOpen</div>
<div class="t" style="left:280px;top:123.01px;font-size:11px;color:#000;letter-spacing:-0.518px">OpenFile</div>
<div class="t" style="left:415px;top:123.01px;font-size:11px;color:#000;letter-spacing:0.237px">Project.Path + "..\\MyTable.tbl", "Table (*....</div>
<div class="t" style="left:638px;top:123.01px;font-size:11px;color:#000;letter-spacing:0.135px">Opens the Project.Path + "..\\MyTable.tbl" file vi...</div>
<svg class="a" style="left:10.5px;top:121.82499999999993px;" width="14.2" height="14.2" viewBox="0 0 14 14"><g transform="translate(0 0) scale(1.4)"><rect width="10" height="10" rx=".4" fill="#1e9be0"/><path d="M1 9V7.400L3.200 5.600 5 7 7.300 4.400 9 6.200V9z" fill="#fff"/><circle cx="3.100" cy="2.900" r="1.150" fill="#fff"/></g></svg>
<div class="a" style="left:0px;top:139px;width:32px;height:1px;background:#cfd2d8"></div>
<div class="a" style="left:75px;top:145px;width:11px;height:8px;background:#fff"></div>
<svg class="a" style="left:76px;top:146.14999999999992px;" width="8" height="4.6" viewBox="0 0 8 5"><path d="M.5 .5L4 4 7.5 .5" fill="none" stroke="#404040" stroke-width="1.350"/></svg>
<svg class="a" style="left:91px;top:140.74999999999994px;" width="16" height="16" viewBox="0 0 16 16"><rect x=".5" y="1.500" width="15" height="12.600" fill="#fff" stroke="#4a5ea6" stroke-width="1"/><text x="1.600" y="11.300" font-family="Liberation Sans" font-weight="bold" font-size="8" fill="#17178f" textLength="12.800" lengthAdjust="spacingAndGlyphs">.net</text><path d="M4 12.600h10.400" stroke="#17178f" stroke-width=".8"/></svg>
<div class="t" style="left:110px;top:142.24px;font-size:11px;color:#000;letter-spacing:-0.414px">MainForm</div>
<div class="a" style="left:0px;top:156px;width:32px;height:1px;background:#cfd2d8"></div>
<svg class="a" style="left:110px;top:157.77499999999998px;" width="16" height="16" viewBox="0 0 16 16"><path d="M.2 .4v10.200l2.400-2.200 1.800 3.400 1.600-.8-1.700-3.300H7.300z" fill="#6c6c6c"/><path d="M6.300 8.500h4l1.700-1.700 3.500 2.300v4.100l-2.100 1.800h-3.100l-1.900-1.900v-1.800H6.300a1.400 1.400 0 0 1 0-2.800z" fill="#fff" stroke="#1e9be0" stroke-width="1.250" stroke-linejoin="round"/></svg>
<div class="t" style="left:129px;top:159.06px;font-size:11px;color:#000;letter-spacing:-0.237px">OrdersView</div>
<div class="t" style="left:280px;top:159.06px;font-size:11px;color:#000;letter-spacing:-0.293px">ClickItem</div>
<div class="t" style="left:415px;top:159.06px;font-size:11px;color:#000;letter-spacing:-0.217px">"Samuel Clemens", ...</div>
<div class="t" style="left:638px;top:159.06px;font-size:11px;color:#000;letter-spacing:-0.169px">Clicks the 0 subitem of the 'Samuel Clemens' item ...</div>
<svg class="a" style="left:10.5px;top:157.875px;" width="14.2" height="14.2" viewBox="0 0 14 14"><g transform="translate(0 0) scale(1.4)"><rect width="10" height="10" rx=".4" fill="#1e9be0"/><path d="M1 9V7.400L3.200 5.600 5 7 7.300 4.400 9 6.200V9z" fill="#fff"/><circle cx="3.100" cy="2.900" r="1.150" fill="#fff"/></g></svg>
<div class="a" style="left:0px;top:175px;width:32px;height:1px;background:#cfd2d8"></div>
<svg class="a" style="left:110px;top:176.7249999999999px;" width="16" height="16" viewBox="0 0 16 16"><path d="M.2 .4v10.200l2.400-2.200 1.800 3.400 1.600-.8-1.700-3.300H7.300z" fill="#6c6c6c"/><path d="M6.300 8.500h4l1.700-1.700 3.500 2.300v4.100l-2.100 1.800h-3.100l-1.900-1.900v-1.800H6.300a1.400 1.400 0 0 1 0-2.800z" fill="#fff" stroke="#1e9be0" stroke-width="1.250" stroke-linejoin="round"/></svg>
<div class="t" style="left:129px;top:178.01px;font-size:11px;color:#000;letter-spacing:-0.271px">ToolBar</div>
<div class="t" style="left:280px;top:178.01px;font-size:11px;color:#000;letter-spacing:-0.293px">ClickItem</div>
<div class="t" style="left:415px;top:178.01px;font-size:11px;color:#000;letter-spacing:0.204px">5, false, ...</div>
<div class="t" style="left:638px;top:178.01px;font-size:11px;color:#000;letter-spacing:-0.060px">Clicks the 5 item of the 'ToolBar' toolbar.</div>
<svg class="a" style="left:10.5px;top:176.82499999999993px;" width="14.2" height="14.2" viewBox="0 0 14 14"><g transform="translate(0 0) scale(1.4)"><rect width="10" height="10" rx=".4" fill="#1e9be0"/><path d="M1 9V7.400L3.200 5.600 5 7 7.300 4.400 9 6.200V9z" fill="#fff"/><circle cx="3.100" cy="2.900" r="1.150" fill="#fff"/></g></svg>
<div class="a" style="left:0px;top:194px;width:32px;height:1px;background:#cfd2d8"></div>
<div class="a" style="left:75px;top:200px;width:11px;height:8px;background:#fff"></div>
<svg class="a" style="left:76px;top:201.14999999999992px;" width="8" height="4.6" viewBox="0 0 8 5"><path d="M.5 .5L4 4 7.5 .5" fill="none" stroke="#404040" stroke-width="1.350"/></svg>
<svg class="a" style="left:91px;top:195.74999999999994px;" width="16" height="16" viewBox="0 0 16 16"><rect x=".5" y="1.500" width="15" height="12.600" fill="#fff" stroke="#4a5ea6" stroke-width="1"/><text x="1.600" y="11.300" font-family="Liberation Sans" font-weight="bold" font-size="8" fill="#17178f" textLength="12.800" lengthAdjust="spacingAndGlyphs">.net</text><path d="M4 12.600h10.400" stroke="#17178f" stroke-width=".8"/></svg>
<div class="t" style="left:110px;top:197.24px;font-size:11px;color:#000;letter-spacing:-0.220px">OrderForm</div>
<div class="a" style="left:0px;top:211px;width:32px;height:1px;background:#cfd2d8"></div>
<svg class="a" style="left:110px;top:212.77499999999998px;" width="16" height="16" viewBox="0 0 16 16"><path d="M.2 .4v10.200l2.400-2.200 1.800 3.400 1.600-.8-1.700-3.300H7.300z" fill="#6c6c6c"/><path d="M6.300 8.500h4l1.700-1.700 3.500 2.300v4.100l-2.100 1.800h-3.100l-1.900-1.900v-1.800H6.300a1.400 1.400 0 0 1 0-2.800z" fill="#fff" stroke="#1e9be0" stroke-width="1.250" stroke-linejoin="round"/></svg>
<div class="t" style="left:129px;top:214.06px;font-size:11px;color:#000;letter-spacing:-0.297px">ProductNames</div>
<div class="t" style="left:280px;top:214.06px;font-size:11px;color:#000;letter-spacing:-0.293px">ClickItem</div>
<div class="t" style="left:415px;top:214.06px;font-size:11px;color:#000;letter-spacing:-0.322px">"FamilyAlbum"</div>
<div class="t" style="left:638px;top:214.06px;font-size:11px;color:#000;letter-spacing:-0.127px">Selects the 'FamilyAlbum' item of the 'ProductNam...</div>
<svg class="a" style="left:10.5px;top:212.875px;" width="14.2" height="14.2" viewBox="0 0 14 14"><g transform="translate(0 0) scale(1.4)"><rect width="10" height="10" rx=".4" fill="#1e9be0"/><path d="M1 9V7.400L3.200 5.600 5 7 7.300 4.400 9 6.200V9z" fill="#fff"/><circle cx="3.100" cy="2.900" r="1.150" fill="#fff"/></g></svg>
<div class="a" style="left:0px;top:230px;width:32px;height:1px;background:#cfd2d8"></div>
<svg class="a" style="left:110px;top:231.7249999999999px;" width="16" height="16" viewBox="0 0 16 16"><path d="M.2 .4v10.200l2.400-2.200 1.800 3.400 1.600-.8-1.700-3.300H7.300z" fill="#6c6c6c"/><rect x="6.500" y="7.600" width="8.800" height="6" rx=".8" fill="#c3e4f7" stroke="#1e9be0" stroke-width="1.300"/><path d="M10.900 13.800v2M8 15.900h5.800" stroke="#1e9be0" stroke-width="1.300"/></svg>
<div class="t" style="left:129px;top:233.01px;font-size:11px;color:#000;letter-spacing:-0.284px">CardNo</div>
<div class="t" style="left:280px;top:233.01px;font-size:11px;color:#000;letter-spacing:0.159px">SetText</div>
<div class="t" style="left:415px;top:233.01px;font-size:11px;color:#000;letter-spacing:-0.045px">"123123123123"</div>
<div class="t" style="left:638px;top:233.01px;font-size:11px;color:#000;letter-spacing:0.026px">Enters the text '123123123123' in the 'CardNo' te...</div>
<svg class="a" style="left:10.5px;top:231.82499999999993px;" width="14.2" height="14.2" viewBox="0 0 14 14"><g transform="translate(0 0) scale(1.4)"><rect width="10" height="10" rx=".4" fill="#1e9be0"/><path d="M1 9V7.400L3.200 5.600 5 7 7.300 4.400 9 6.200V9z" fill="#fff"/><circle cx="3.100" cy="2.900" r="1.150" fill="#fff"/></g></svg>
<div class="a" style="left:0px;top:249px;width:32px;height:1px;background:#cfd2d8"></div>
<svg class="a" style="left:110px;top:250.67499999999995px;" width="16" height="16" viewBox="0 0 16 16"><path d="M.2 .4v10.200l2.400-2.200 1.800 3.400 1.600-.8-1.700-3.300H7.300z" fill="#6c6c6c"/><path d="M6.300 8.500h4l1.700-1.700 3.500 2.300v4.100l-2.100 1.800h-3.100l-1.900-1.900v-1.800H6.300a1.400 1.400 0 0 1 0-2.800z" fill="#fff" stroke="#1e9be0" stroke-width="1.250" stroke-linejoin="round"/></svg>
<div class="t" style="left:129px;top:251.96px;font-size:11px;color:#000;letter-spacing:-0.138px">ButtonOK</div>
<div class="t" style="left:280px;top:251.96px;font-size:11px;color:#000;letter-spacing:-0.276px">ClickButton</div>
<div class="t" style="left:638px;top:251.96px;font-size:11px;color:#000;letter-spacing:-0.087px">Clicks the 'ButtonOK' button.</div>
<svg class="a" style="left:10.5px;top:250.77499999999998px;" width="14.2" height="14.2" viewBox="0 0 14 14"><g transform="translate(0 0) scale(1.4)"><rect width="10" height="10" rx=".4" fill="#1e9be0"/><path d="M1 9V7.400L3.200 5.600 5 7 7.300 4.400 9 6.200V9z" fill="#fff"/><circle cx="3.100" cy="2.900" r="1.150" fill="#fff"/></g></svg>
<div class="a" style="left:0px;top:268px;width:32px;height:1px;background:#cfd2d8"></div>
<div class="a" style="left:37px;top:275px;width:11px;height:8px;background:#fff"></div>
<svg class="a" style="left:38px;top:276.02499999999986px;" width="8" height="4.6" viewBox="0 0 8 5"><path d="M.5 .5L4 4 7.5 .5" fill="none" stroke="#404040" stroke-width="1.350"/></svg>
<svg class="a" style="left:53px;top:269.8249999999999px;" width="16" height="16" viewBox="0 0 16 16"><text x="0" y="12" font-family="Liberation Sans" font-weight="bold" font-size="11" fill="#1e9be0" textLength="16" lengthAdjust="spacingAndGlyphs">{···}</text></svg>
<div class="t" style="left:72px;top:270.91px;font-size:11px;color:#000;letter-spacing:-0.048px">Create a new order</div>
<div class="a" style="left:0px;top:287px;width:32px;height:1px;background:#cfd2d8"></div>
<div class="a" style="left:56px;top:293px;width:11px;height:8px;background:#fff"></div>
<svg class="a" style="left:57px;top:294.0499999999999px;" width="8" height="4.6" viewBox="0 0 8 5"><path d="M.5 .5L4 4 7.5 .5" fill="none" stroke="#404040" stroke-width="1.350"/></svg>
<svg class="a" style="left:72px;top:287.8499999999999px;" width="16" height="16" viewBox="0 0 16 16"><rect x="1" y="2" width="13" height="11.500" rx="1" fill="#fff" stroke="#7d86c8" stroke-width="1.200"/><path d="M.5 2.400h14" stroke="#1c1ca8" stroke-width="1.800"/></svg>
<div class="t" style="left:91px;top:290.14px;font-size:11px;color:#000;letter-spacing:-0.188px">Orders</div>
<div class="a" style="left:0px;top:304px;width:32px;height:1px;background:#cfd2d8"></div>
<div class="a" style="left:75px;top:310px;width:11px;height:8px;background:#fff"></div>
<svg class="a" style="left:76px;top:311.1499999999999px;" width="8" height="4.6" viewBox="0 0 8 5"><path d="M.5 .5L4 4 7.5 .5" fill="none" stroke="#404040" stroke-width="1.350"/></svg>
<svg class="a" style="left:91px;top:305.74999999999994px;" width="16" height="16" viewBox="0 0 16 16"><rect x=".5" y="1.500" width="15" height="12.600" fill="#fff" stroke="#4a5ea6" stroke-width="1"/><text x="1.600" y="11.300" font-family="Liberation Sans" font-weight="bold" font-size="8" fill="#17178f" textLength="12.800" lengthAdjust="spacingAndGlyphs">.net</text><path d="M4 12.600h10.400" stroke="#17178f" stroke-width=".8"/></svg>
<div class="t" style="left:110px;top:307.24px;font-size:11px;color:#000;letter-spacing:-0.414px">MainForm</div>
<div class="a" style="left:0px;top:321px;width:32px;height:1px;background:#cfd2d8"></div>
<svg class="a" style="left:110px;top:322.775px;" width="16" height="16" viewBox="0 0 16 16"><path d="M.2 .4v10.200l2.400-2.200 1.800 3.400 1.600-.8-1.700-3.300H7.300z" fill="#6c6c6c"/><path d="M6.300 8.500h4l1.700-1.700 3.500 2.300v4.100l-2.100 1.800h-3.100l-1.900-1.900v-1.800H6.300a1.400 1.400 0 0 1 0-2.800z" fill="#fff" stroke="#1e9be0" stroke-width="1.250" stroke-linejoin="round"/></svg>
<div class="t" style="left:129px;top:324.06px;font-size:11px;color:#000;letter-spacing:-0.271px">ToolBar</div>
<div class="t" style="left:280px;top:324.06px;font-size:11px;color:#000;letter-spacing:-0.293px">ClickItem</div>
<div class="t" style="left:415px;top:324.06px;font-size:11px;color:#000;letter-spacing:0.250px">4, false, ...</div>
<div class="t" style="left:638px;top:324.06px;font-size:11px;color:#000;letter-spacing:-0.060px">Clicks the 4 item of the 'ToolBar' toolbar.</div>
<svg class="a" style="left:10.5px;top:322.875px;" width="14.2" height="14.2" viewBox="0 0 14 14"><g transform="translate(0 0) scale(1.4)"><rect width="10" height="10" rx=".4" fill="#1e9be0"/><path d="M1 9V7.400L3.200 5.600 5 7 7.300 4.400 9 6.200V9z" fill="#fff"/><circle cx="3.100" cy="2.900" r="1.150" fill="#fff"/></g></svg>
<div class="a" style="left:0px;top:340px;width:32px;height:1px;background:#cfd2d8"></div>
<div class="a" style="left:75px;top:346px;width:11px;height:8px;background:#fff"></div>
<svg class="a" style="left:76px;top:347.19999999999993px;" width="8" height="4.6" viewBox="0 0 8 5"><path d="M.5 .5L4 4 7.5 .5" fill="none" stroke="#404040" stroke-width="1.350"/></svg>
<svg class="a" style="left:91px;top:341.79999999999995px;" width="16" height="16" viewBox="0 0 16 16"><rect x=".5" y="1.500" width="15" height="12.600" fill="#fff" stroke="#4a5ea6" stroke-width="1"/><text x="1.600" y="11.300" font-family="Liberation Sans" font-weight="bold" font-size="8" fill="#17178f" textLength="12.800" lengthAdjust="spacingAndGlyphs">.net</text><path d="M4 12.600h10.400" stroke="#17178f" stroke-width=".8"/></svg>
<div class="t" style="left:110px;top:343.29px;font-size:11px;color:#000;letter-spacing:-0.220px">OrderForm</div>
<div class="a" style="left:0px;top:357px;width:32px;height:1px;background:#cfd2d8"></div>
<svg class="a" style="left:110px;top:358.82499999999993px;" width="16" height="16" viewBox="0 0 16 16"><path d="M.2 .4v10.200l2.400-2.200 1.800 3.400 1.600-.8-1.700-3.300H7.300z" fill="#6c6c6c"/><path d="M6.300 8.500h4l1.700-1.700 3.500 2.300v4.100l-2.100 1.800h-3.100l-1.900-1.900v-1.800H6.300a1.400 1.400 0 0 1 0-2.800z" fill="#fff" stroke="#1e9be0" stroke-width="1.250" stroke-linejoin="round"/></svg>
<div class="t" style="left:129px;top:360.11px;font-size:11px;color:#000;letter-spacing:-0.297px">ProductNames</div>
<div class="t" style="left:280px;top:360.11px;font-size:11px;color:#000;letter-spacing:-0.293px">ClickItem</div>
<div class="t" style="left:415px;top:360.11px;font-size:11px;color:#000;letter-spacing:-0.139px">"ScreenSaver"</div>
<div class="t" style="left:638px;top:360.11px;font-size:11px;color:#000;letter-spacing:-0.072px">Selects the 'ScreenSaver' item of the 'ProductNa...</div>
<svg class="a" style="left:10.5px;top:358.92499999999995px;" width="14.2" height="14.2" viewBox="0 0 14 14"><g transform="translate(0 0) scale(1.4)"><rect width="10" height="10" rx=".4" fill="#1e9be0"/><path d="M1 9V7.400L3.200 5.600 5 7 7.300 4.400 9 6.200V9z" fill="#fff"/><circle cx="3.100" cy="2.900" r="1.150" fill="#fff"/></g></svg>
<div class="a" style="left:0px;top:376px;width:32px;height:1px;background:#cfd2d8"></div>
<svg class="a" style="left:110px;top:377.775px;" width="16" height="16" viewBox="0 0 16 16"><path d="M.2 .4v10.200l2.400-2.200 1.800 3.400 1.600-.8-1.700-3.300H7.300z" fill="#6c6c6c"/><rect x="6.500" y="7.600" width="8.800" height="6" rx=".8" fill="#c3e4f7" stroke="#1e9be0" stroke-width="1.300"/><path d="M10.900 13.800v2M8 15.900h5.800" stroke="#1e9be0" stroke-width="1.300"/></svg>
<div class="t" style="left:129px;top:379.06px;font-size:11px;color:#000;letter-spacing:0.141px">Quantity</div>
<div class="t" style="left:280px;top:379.06px;font-size:11px;color:#000;letter-spacing:-0.079px">wValue [Set]</div>
<div class="t" style="left:415px;top:379.06px;font-size:11px;color:#000;letter-spacing:-0.1px">2</div>
<div class="t" style="left:638px;top:379.06px;font-size:11px;color:#000;letter-spacing:0.065px">Sets the value of the UpDown control 'Quantity' t...</div>
<div class="a" style="left:0px;top:395px;width:32px;height:1px;background:#cfd2d8"></div>
<svg class="a" style="left:110px;top:396.725px;" width="16" height="16" viewBox="0 0 16 16"><path d="M.2 .4v10.200l2.400-2.200 1.800 3.400 1.600-.8-1.700-3.300H7.300z" fill="#6c6c6c"/><rect x="6.500" y="7.600" width="8.800" height="6" rx=".8" fill="#c3e4f7" stroke="#1e9be0" stroke-width="1.300"/><path d="M10.900 13.800v2M8 15.900h5.800" stroke="#1e9be0" stroke-width="1.300"/></svg>
<div class="t" style="left:129px;top:398.01px;font-size:11px;color:#000;letter-spacing:-0.088px">Date</div>
<div class="t" style="left:280px;top:398.01px;font-size:11px;color:#000;letter-spacing:-0.014px">wDate [Set]</div>
<div class="t" style="left:415px;top:398.01px;font-size:11px;color:#000;letter-spacing:0.238px">"11/02/1999"</div>
<div class="t" style="left:638px;top:398.01px;font-size:11px;color:#000;letter-spacing:0.080px">Sets the date '11/02/1999' in the 'Date' date/time...</div>
<div class="a" style="left:0px;top:414px;width:32px;height:1px;background:#cfd2d8"></div>
<svg class="a" style="left:110px;top:415.67500000000007px;" width="16" height="16" viewBox="0 0 16 16"><path d="M.2 .4v10.200l2.400-2.200 1.800 3.400 1.600-.8-1.700-3.300H7.300z" fill="#6c6c6c"/><rect x="6.500" y="7.600" width="8.800" height="6" rx=".8" fill="#c3e4f7" stroke="#1e9be0" stroke-width="1.300"/><path d="M10.900 13.800v2M8 15.900h5.800" stroke="#1e9be0" stroke-width="1.300"/></svg>
<div class="t" style="left:129px;top:416.96px;font-size:11px;color:#000;letter-spacing:-0.236px">Customer</div>
<div class="t" style="left:280px;top:416.96px;font-size:11px;color:#000;letter-spacing:0.159px">SetText</div>
<div class="t" style="left:415px;top:416.96px;font-size:11px;color:#000;letter-spacing:-0.066px">"David Waters"</div>
<div class="t" style="left:638px;top:416.96px;font-size:11px;color:#000;letter-spacing:0.059px">Enters the text 'David Waters' in the 'Customer' t...</div>
<svg class="a" style="left:10.5px;top:415.7750000000001px;" width="14.2" height="14.2" viewBox="0 0 14 14"><g transform="translate(0 0) scale(1.4)"><rect width="10" height="10" rx=".4" fill="#1e9be0"/><path d="M1 9V7.400L3.200 5.600 5 7 7.300 4.400 9 6.200V9z" fill="#fff"/><circle cx="3.100" cy="2.900" r="1.150" fill="#fff"/></g></svg>
</div>
<div class="a" style="left:240px;top:580px;width:88px;height:31px;background:#fff;border:1px solid #e3e5ea;border-top:none"></div>
<div class="a" style="left:328px;top:582px;width:79px;height:26px;background:#eceef3;border:1px solid #dcdfe6;border-top:none"></div>
<div class="a" style="left:406px;top:582px;width:92px;height:26px;background:#eceef3;border:1px solid #dcdfe6;border-top:none"></div>
<svg class="a" style="left:246px;top:588px;" width="16.5" height="16.5" viewBox="0 0 16 16"><path d="M10 14.4H1.6V1.6h5.7l3.4 3.4v3" fill="none" stroke="#6d6d6d" stroke-width="1.2"/><path d="M7.2 1.8v3.4h3.4" fill="none" stroke="#6d6d6d" stroke-width="1.2"/><path d="M8.800 9.300h3.600M8.800 12h5.200M8.800 14.700h7" stroke="#1e9be0" stroke-width="1.500"/></svg>
<div class="t" style="left:268px;top:589.79px;font-size:11px;color:#000;letter-spacing:0.004px">Test Steps</div>
<svg class="a" style="left:333px;top:586px;" width="16.5" height="16.5" viewBox="0 0 16 16"><path d="M10 14.4H1.6V1.6h5.7l3.4 3.4v3" fill="none" stroke="#6d6d6d" stroke-width="1.2"/><path d="M7.2 1.8v3.4h3.4" fill="none" stroke="#6d6d6d" stroke-width="1.2"/><text x="5.800" y="15.800" font-family="Liberation Serif" font-style="italic" font-weight="bold" font-size="16" fill="#1e9be0">x</text></svg>
<div class="t" style="left:355px;top:587.79px;font-size:11px;color:#000;letter-spacing:-0.227px">Variables</div>
<svg class="a" style="left:412px;top:586px;" width="16.5" height="16.5" viewBox="0 0 16 16"><path d="M10 14.4H1.6V1.6h5.7l3.4 3.4v3" fill="none" stroke="#6d6d6d" stroke-width="1.2"/><path d="M7.2 1.8v3.4h3.4" fill="none" stroke="#6d6d6d" stroke-width="1.2"/><path d="M7.500 8.500h8.500M7.500 11.500h8.500M7.500 14.500h8.500" stroke="#1e9be0" stroke-width="1.100"/><rect x="10" y="7.300" width="2.400" height="2.400" fill="#1e9be0"/><rect x="12.500" y="10.300" width="2.400" height="2.400" fill="#1e9be0"/><rect x="9" y="13.300" width="2.400" height="2.400" fill="#1e9be0"/></svg>
<div class="t" style="left:434px;top:587.79px;font-size:11px;color:#000;letter-spacing:-0.186px">Parameters</div>
<div class="a" style="left:240px;top:621px;width:1105px;height:24px;background:#d9dde6"></div>
<svg class="a" style="left:247px;top:622.6px;" width="18" height="16" viewBox="0 0 18 16"><g transform="translate(0 4.5) scale(1.15)"><rect width="10" height="10" rx=".4" fill="#1e9be0"/><path d="M1 9V7.400L3.200 5.600 5 7 7.300 4.400 9 6.200V9z" fill="#fff"/><circle cx="3.100" cy="2.900" r="1.150" fill="#fff"/></g><path d="M12.700 10.500V3.400a2.200 2.200 0 0 1 4.400 0v7.600a1.250 1.250 0 0 1-2.500 0V4.200" fill="none" stroke="#636363" stroke-width="1.250"/></svg>
<div class="t" style="left:268px;top:625.79px;font-size:11px;color:#000;letter-spacing:-0.181px">Test Visualizer</div>
<svg class="a" style="left:1335px;top:629px;" width="8" height="8" viewBox="0 0 8 8"><path d="M3 3V.7h4.300V5H5" fill="none" stroke="#5f646e" stroke-width="1.200"/><rect x=".7" y="3" width="4.300" height="4.300" fill="none" stroke="#5f646e" stroke-width="1.200"/><path d="M.7 3.600h4.300" stroke="#5f646e" stroke-width="1.400"/></svg>
<div class="a" style="left:235px;top:84px;width:1113px;height:564px;border:3px solid #fc800f"></div>
<div class="a" style="left:698px;top:34px;width:185px;height:38px;background:#fff;border:3px solid #fc800f;border-radius:7px"></div>
<div class="t" style="left:720.5px;top:46.60px;font-size:15px;color:#fc800f;letter-spacing:0.230px">Keyword Test Editor</div>
</body></html>
